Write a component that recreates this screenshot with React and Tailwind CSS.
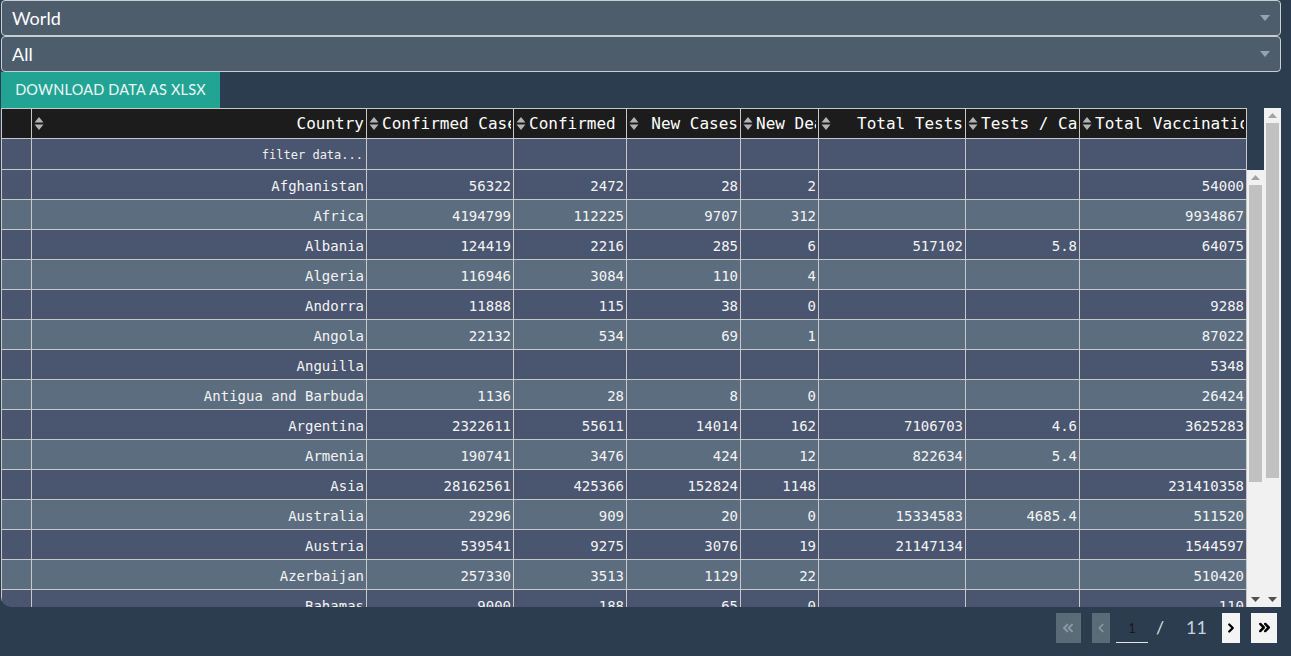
import { ChevronLeft, ChevronRight, ChevronsLeft, ChevronsRight } from "lucide-react";

const COLS = [30, 335, 147, 113, 114, 78, 147, 114, 167];
const GRID = "grid grid-cols-[30px_335px_147px_113px_114px_78px_147px_114px_167px]";

const HEADERS = [
  { label: "", icon: false },
  { label: "Country" },
  { label: "Confirmed Cases" },
  { label: "Confirmed", left: true },
  { label: "New Cases" },
  { label: "New Deaths" },
  { label: "Total Tests" },
  { label: "Tests / Case" },
  { label: "Total Vaccinations" },
];

const ROWS = [
  ["Afghanistan", "56322", "2472", "28", "2", "", "", "54000"],
  ["Africa", "4194799", "112225", "9707", "312", "", "", "9934867"],
  ["Albania", "124419", "2216", "285", "6", "517102", "5.8", "64075"],
  ["Algeria", "116946", "3084", "110", "4", "", "", ""],
  ["Andorra", "11888", "115", "38", "0", "", "", "9288"],
  ["Angola", "22132", "534", "69", "1", "", "", "87022"],
  ["Anguilla", "", "", "", "", "", "", "5348"],
  ["Antigua and Barbuda", "1136", "28", "8", "0", "", "", "26424"],
  ["Argentina", "2322611", "55611", "14014", "162", "7106703", "4.6", "3625283"],
  ["Armenia", "190741", "3476", "424", "12", "822634", "5.4", ""],
  ["Asia", "28162561", "425366", "152824", "1148", "", "", "231410358"],
  ["Australia", "29296", "909", "20", "0", "15334583", "4685.4", "511520"],
  ["Austria", "539541", "9275", "3076", "19", "21147134", "", "1544597"],
  ["Azerbaijan", "257330", "3513", "1129", "22", "", "", "510420"],
  ["Bahamas", "9000", "188", "65", "0", "", "", "110"],
];

function SortIcon() {
  return (
    <svg width="10" height="15" viewBox="0 0 10 15" className="shrink-0">
      <path d="M5 1 L9.5 6.5 H0.5 Z" fill="#b4b4b4" />
      <path d="M5 14 L9.5 8.5 H0.5 Z" fill="#b4b4b4" />
    </svg>
  );
}

function Caret() {
  return (
    <svg width="10" height="6" viewBox="0 0 10 6">
      <path d="M0 0 H10 L5 6 Z" fill="#9aa3ad" />
    </svg>
  );
}

function Select({ value }) {
  return (
    <div className="h-[36px] flex items-center justify-between rounded-[4px] border border-[#c9ced3] bg-[#4e5d6c] pl-[10px] pr-[10px]">
      <span className="text-[18px] text-white">{value}</span>
      <Caret />
    </div>
  );
}

function Scrollbar({ thumbTop, thumbBottom }) {
  return (
    <div className="relative w-[17px] h-full bg-[#f1f1f1]">
      <svg className="absolute left-[4px] top-[5px]" width="9" height="5" viewBox="0 0 9 5">
        <path d="M4.5 0 L9 5 H0 Z" fill="#a3a3a3" />
      </svg>
      <div
        className="absolute left-[2px] right-[2px] bg-[#c1c1c1]"
        style={{ top: thumbTop, bottom: thumbBottom }}
      />
      <svg className="absolute left-[4px] bottom-[5px]" width="9" height="5" viewBox="0 0 9 5">
        <path d="M0 0 H9 L4.5 5 Z" fill="#505050" />
      </svg>
    </div>
  );
}

export default function App() {
  return (
    <div
      className="min-h-screen bg-[#2b3d4f] pl-[1px] pr-[10px]"
      style={{ fontFamily: "Lato, 'Open Sans', sans-serif" }}
    >
      <Select value="World" />
      <Select value="All" />
      <button className="h-[36px] w-[219px] bg-[#22a495] text-[14.5px] text-[#eef6f5] tracking-[0.2px]">
        DOWNLOAD DATA AS XLSX
      </button>

      <div className="flex h-[499px]">
        <div
          className="flex flex-col w-[1263px] overflow-hidden rounded-bl-[10px]"
          style={{ fontFamily: "'DejaVu Sans Mono', 'Liberation Mono', monospace" }}
        >
          <div className="flex">
            <div className="w-[1246px] border-t border-l border-[#c8c8c8]">
              <div className={`${GRID} h-[30px] bg-[#1c1c1c]`}>
                {HEADERS.map((h, i) => (
                  <div
                    key={i}
                    className="flex items-center gap-[3px] border-r border-b border-[#c8c8c8] pl-[2px] pr-[2px] overflow-hidden"
                  >
                    {h.icon !== false && <SortIcon />}
                    <span
                      className={`flex-1 whitespace-nowrap overflow-hidden text-[16px] text-white ${h.left ? "text-left" : "text-right"}`}
                    >
                      {h.label}
                    </span>
                  </div>
                ))}
              </div>
              <div className={`${GRID} h-[31px] bg-[#4a5570]`}>
                {COLS.map((_, i) => (
                  <div key={i} className="flex items-center justify-end border-r border-b border-[#c8c8c8] pr-[3px] pt-[2px]">
                    {i === 1 && <span className="text-[12px] text-[#f0f0f0]">filter data...</span>}
                  </div>
                ))}
              </div>
            </div>
          </div>

          <div className="flex flex-1 min-h-0">
            <div className="w-[1246px] border-l border-[#c8c8c8] overflow-hidden">
              {ROWS.map((r, ri) => (
                <div
                  key={ri}
                  className={`${GRID} h-[30px] ${ri % 2 === 0 ? "bg-[#4a5570]" : "bg-[#5c6d80]"}`}
                >
                  <div className="border-r border-b border-[#c8c8c8]" />
                  {r.map((v, ci) => (
                    <div
                      key={ci}
                      className="flex items-center justify-end border-r border-b border-[#c8c8c8] pr-[2px] pt-[3px] text-[14px] text-[#f4f4f4] whitespace-nowrap overflow-hidden"
                    >
                      {v}
                    </div>
                  ))}
                </div>
              ))}
            </div>
            <Scrollbar thumbTop={15} thumbBottom={125} />
          </div>
        </div>
        <Scrollbar thumbTop={15} thumbBottom={129} />
      </div>

      <div className="flex items-center justify-end h-[36px] pt-[5px] pr-[4px]">
        <button className="w-[25px] h-[30px] flex items-center justify-center bg-[#5b6a77]">
          <ChevronsLeft size={16} strokeWidth={3} color="#8c99a5" />
        </button>
        <button className="ml-[11px] w-[18px] h-[30px] flex items-center justify-center bg-[#5b6a77]">
          <ChevronLeft size={14} strokeWidth={3} color="#8c99a5" />
        </button>
        <div className="ml-[6px] w-[32px] h-[30px] flex items-end justify-center border-b border-[#e0e6ea] pb-[3px]">
          <span className="text-[13px] text-[#1a1a1a]">1</span>
        </div>
        <span className="ml-[8px] text-[18px] text-[#d5dde4]">/</span>
        <span className="ml-[22px] text-[18px] text-[#c6d3df]">11</span>
        <button className="ml-[15px] w-[18px] h-[30px] flex items-center justify-center bg-[#f4f4f4]">
          <ChevronRight size={14} strokeWidth={4} color="#000" />
        </button>
        <button className="ml-[11px] w-[26px] h-[30px] flex items-center justify-center bg-[#f4f4f4]">
          <ChevronsRight size={17} strokeWidth={3.5} color="#000" />
        </button>
      </div>
    </div>
  );
}
